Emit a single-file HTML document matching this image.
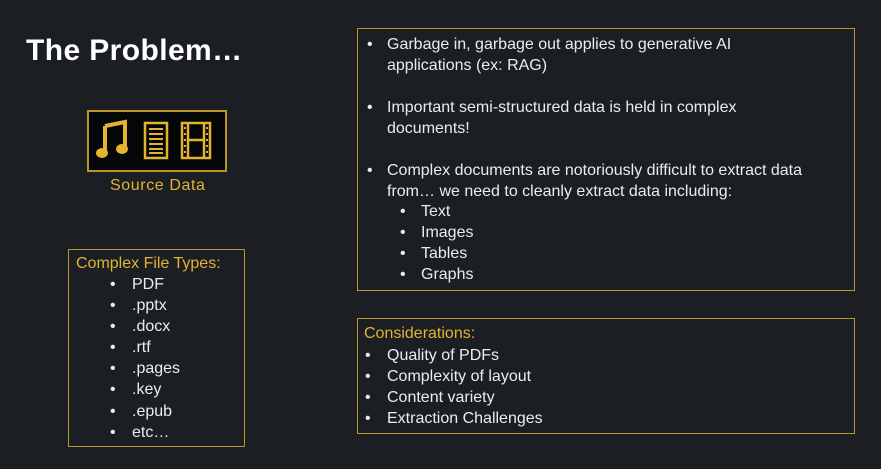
<!DOCTYPE html><html><head><style>
body{margin:0;width:881px;height:469px;background:#1b1e23;overflow:hidden;position:relative;font-family:"Liberation Sans",sans-serif;color:#ececec}
.t{position:absolute;font-size:16px;line-height:20px;white-space:nowrap}
.g{color:#e2b432}
.b{position:absolute;border:1.5px solid #b8962c}
</style></head><body>
<div class="t" style="left:26px;top:33px;font-size:30px;line-height:36px;font-weight:bold;color:#fff;letter-spacing:0.4px">The Problem…</div>
<div class="b" style="left:87px;top:110px;width:136px;height:58px;background:#050608;border-width:2px"></div>
<svg style="position:absolute;left:95px;top:118px" width="125" height="44" viewBox="0 0 125 44">
<path d="M10 8 L30 4 L30 30 M10 8 L10 34" stroke="#e2b432" stroke-width="4" fill="none"/>
<ellipse cx="7" cy="35" rx="6" ry="5" fill="#e2b432"/><ellipse cx="27" cy="31" rx="6" ry="5" fill="#e2b432"/>
<rect x="50" y="5" width="22" height="35" fill="none" stroke="#e2b432" stroke-width="2.5"/>
<path d="M54 11h14M54 16h14M54 21h14M54 26h14M54 31h14M54 35h14" stroke="#e2b432" stroke-width="2"/>
<rect x="87" y="5" width="28" height="35" fill="none" stroke="#e2b432" stroke-width="2.5"/>
<path d="M93 5v35M109 5v35M93 22h16" stroke="#e2b432" stroke-width="2.5"/>
<path d="M90 9v2M90 15v2M90 21v2M90 27v2M90 33v2M112 9v2M112 15v2M112 21v2M112 27v2M112 33v2" stroke="#e2b432" stroke-width="2"/>
</svg>
<div class="t g" style="left:110px;top:176px;font-size:16px;letter-spacing:0.6px">Source Data</div>

<div class="b" style="left:68px;top:249px;width:175px;height:196px"></div>
<div class="t g" style="left:76px;top:254px">Complex File Types:</div>
<div class="t" style="left:110px;top:274px;line-height:21.1px">•<br>•<br>•<br>•<br>•<br>•<br>•<br>•</div>
<div class="t" style="left:132px;top:274px;line-height:21.1px">PDF<br>.pptx<br>.docx<br>.rtf<br>.pages<br>.key<br>.epub<br>etc…</div>

<div class="b" style="left:357px;top:28px;width:496px;height:261px"></div>
<div class="t" style="left:367px;top:34px;line-height:21px">•<br><br><br>•<br><br><br>•</div>
<div class="t" style="left:387px;top:34px;line-height:21px">Garbage in, garbage out applies to generative AI<br>applications (ex: RAG)<br><br>Important semi-structured data is held in complex<br>documents!<br><br>Complex documents are notoriously difficult to extract data<br>from… we need to cleanly extract data including:</div>
<div class="t" style="left:400px;top:201px;line-height:21px">•<br>•<br>•<br>•</div>
<div class="t" style="left:421px;top:201px;line-height:21px">Text<br>Images<br>Tables<br>Graphs</div>

<div class="b" style="left:357px;top:318px;width:496px;height:114px"></div>
<div class="t g" style="left:364px;top:324px">Considerations:</div>
<div class="t" style="left:365px;top:345px;line-height:21px">•<br>•<br>•<br>•</div>
<div class="t" style="left:387px;top:345px;line-height:21px">Quality of PDFs<br>Complexity of layout<br>Content variety<br>Extraction Challenges</div>
</body></html>
